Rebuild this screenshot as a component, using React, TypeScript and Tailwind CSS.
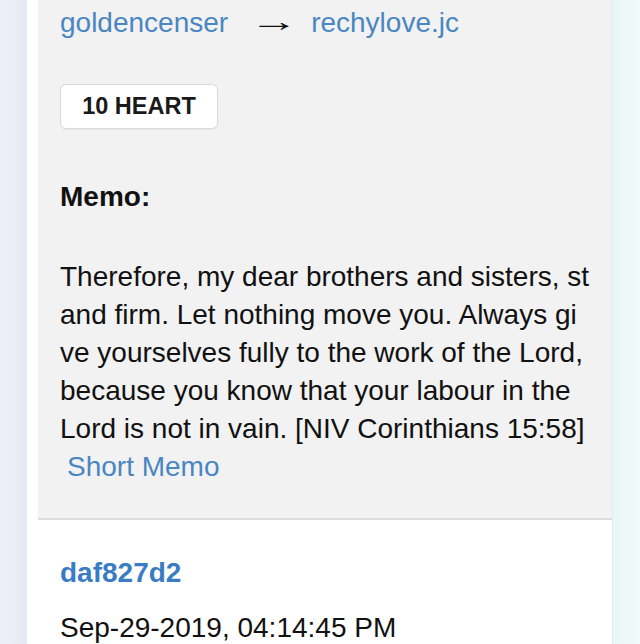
import React from 'react'

const memo =
  'Therefore, my dear brothers and sisters, stand firm. Let nothing move you. Always give yourselves fully to the work of the Lord, because you know that your labour in the Lord is not in vain. [NIV Corinthians 15:58]'

export default function App() {
  return (
    <div className="flex h-[644px] w-[640px] overflow-hidden bg-white font-['Liberation_Sans',Arial,sans-serif] text-[#111]">
      {/* left gutter */}
      <div className="w-[27px] shrink-0 bg-gradient-to-r from-[#eef0f9] to-[#e6e8f3]" />
      <div className="w-[11px] shrink-0 bg-white" />

      {/* transfer card */}
      <div className="flex w-[574px] shrink-0 flex-col">
        <div className="h-[520px] shrink-0 border-b-2 border-b-[#dcdcdc] bg-[#f2f2f2] px-[22px] pt-[4px]">
          <div className="flex items-center text-[28px] leading-[38px]">
            <span className="text-[#4a86c1]">goldencenser</span>
            <span className="ml-[30px] inline-block w-[32px] -translate-y-[2px] scale-x-[1.7] text-center text-[29px] text-[#111]">→</span>
            <span className="ml-[21px] text-[#4a86c1]">rechylove.jc</span>
          </div>

          <div className="mt-[42px] flex h-[45px] w-[158px] items-center justify-center rounded-[6px] border border-[#dadada] bg-white text-[23.5px] font-bold text-[#1a1a1a] shadow-[0_1px_1px_rgba(0,0,0,0.04)]">
            10 HEART
          </div>

          <p className="mt-[49px] text-[28px] font-bold leading-[38px] text-[#111]">Memo:</p>

          <p className="mt-[42px] break-all text-[28px] leading-[38px] text-[#111]">
            {memo} <span className="pl-[7px] text-[#4a86c1]">Short Memo</span>
          </p>
        </div>

        <div className="flex-1 bg-white px-[22px] pt-[34px]">
          <p className="text-[28px] font-bold leading-[38px] text-[#3a7cc4]">daf827d2</p>
          <p className="mt-[17px] text-[28px] leading-[38px] text-[#111]">Sep-29-2019, 04:14:45 PM</p>
        </div>
      </div>

      {/* right gutter */}
      <div className="flex-1 border-l border-l-[#e2eded] bg-gradient-to-r from-[#eaf5f5] to-[#f2fbfb]" />
    </div>
  )
}
